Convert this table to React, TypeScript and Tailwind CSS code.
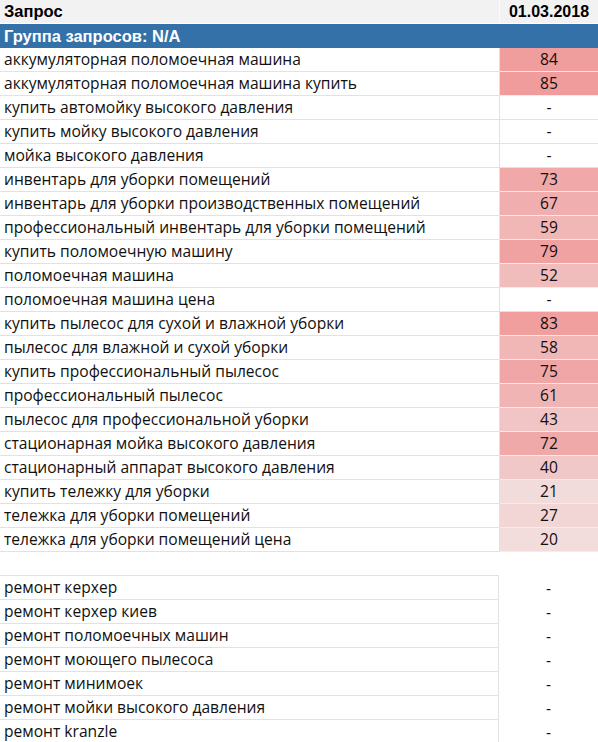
import React from "react";

type Row = { q: string; v: number | null };

const upper: Row[] = [
  { q: "аккумуляторная поломоечная машина", v: 84 },
  { q: "аккумуляторная поломоечная машина купить", v: 85 },
  { q: "купить автомойку высокого давления", v: null },
  { q: "купить мойку высокого давления", v: null },
  { q: "мойка высокого давления", v: null },
  { q: "инвентарь для уборки помещений", v: 73 },
  { q: "инвентарь для уборки производственных помещений", v: 67 },
  { q: "профессиональный инвентарь для уборки помещений", v: 59 },
  { q: "купить поломоечную машину", v: 79 },
  { q: "поломоечная машина", v: 52 },
  { q: "поломоечная машина цена", v: null },
  { q: "купить пылесос для сухой и влажной уборки", v: 83 },
  { q: "пылесос для влажной и сухой уборки", v: 58 },
  { q: "купить профессиональный пылесос", v: 75 },
  { q: "профессиональный пылесос", v: 61 },
  { q: "пылесос для профессиональной уборки", v: 43 },
  { q: "стационарная мойка высокого давления", v: 72 },
  { q: "стационарный аппарат высокого давления", v: 40 },
  { q: "купить тележку для уборки", v: 21 },
  { q: "тележка для уборки помещений", v: 27 },
  { q: "тележка для уборки помещений цена", v: 20 },
];

const lower = [
  "ремонт керхер",
  "ремонт керхер киев",
  "ремонт поломоечных машин",
  "ремонт моющего пылесоса",
  "ремонт минимоек",
  "ремонт мойки высокого давления",
  "ремонт kranzle",
];

function heat(v: number) {
  const t = Math.max(0, Math.min(1, (v - 20) / 65));
  const r = Math.round(242 - 2 * t);
  const g = Math.round(220 - 64 * t);
  return `rgb(${r},${g},${g})`;
}

const body = { fontFamily: '"Open Sans", "Noto Sans", sans-serif' };
const bold = { fontFamily: '"Liberation Sans", Arial, sans-serif' };

export default function App() {
  return (
    <div className="w-[598px] h-[742px] overflow-hidden bg-white text-black">
      <div className="flex h-6 bg-[#f2f2f2] border-b border-white" style={bold}>
        <div className="w-[499px] pl-1 flex items-center font-bold text-[16.5px]">Запрос</div>
        <div className="w-[99px] border-l border-[#fafafa] flex items-center justify-center font-bold text-[16px]">
          01.03.2018
        </div>
      </div>
      <div className="h-6 bg-[#3571a9] text-white font-bold text-[16.5px] pl-1 flex items-center" style={bold}>
        Группа запросов: N/A
      </div>
      <div style={body} className="text-[15.6px] text-[#111]">
        {upper.map((r, i) => (
          <div key={i} className="flex h-6">
            <div className="w-[499px] pl-1 pt-px flex items-center border-b border-[#e2e2e2] whitespace-nowrap">{r.q}</div>
            <div className="w-[99px] border-l border-[#e2e2e2] flex">
              {r.v === null ? (
                <div className="flex-1 pt-px flex items-center justify-center border-b border-[#e2e2e2]">-</div>
              ) : (
                <div
                  className="flex-1 pt-px flex items-center justify-center border-b border-[#f6eaea]"
                  style={{ backgroundColor: heat(r.v) }}
                >
                  {r.v}
                </div>
              )}
            </div>
          </div>
        ))}
        <div className="flex h-6">
          <div className="w-[499px] border-b border-[#e2e2e2]" />
          <div className="w-[99px]" />
        </div>
        {lower.map((q, i) => (
          <div key={i} className="flex h-6">
            <div className="w-[499px] pl-1 pt-px flex items-center border-b border-r border-[#e2e2e2] whitespace-nowrap">{q}</div>
            <div className="w-[99px] pt-px flex items-center justify-center">-</div>
          </div>
        ))}
      </div>
    </div>
  );
}
